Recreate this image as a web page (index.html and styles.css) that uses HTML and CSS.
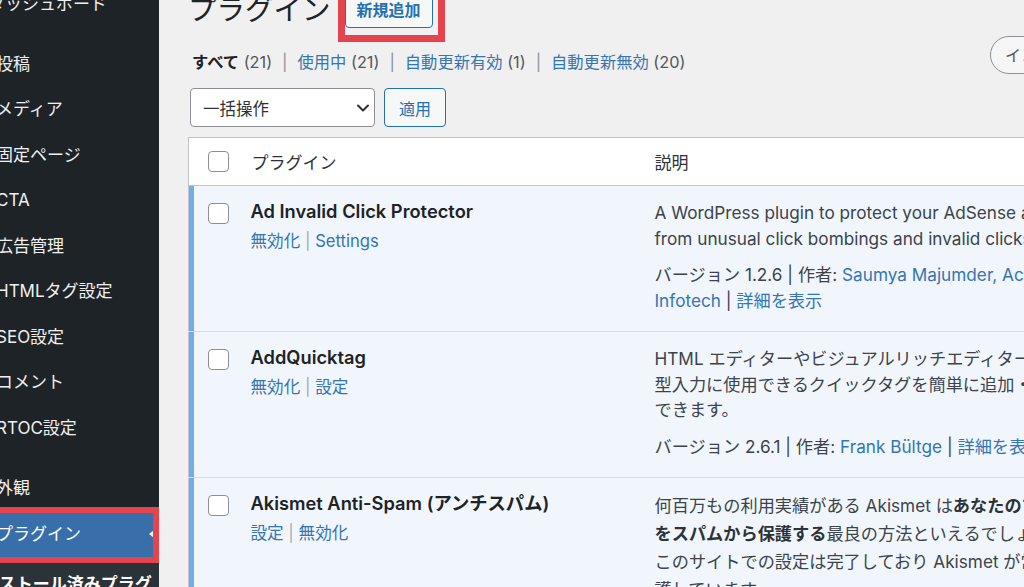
FILE: index.html
```html
<!DOCTYPE html>
<html lang="ja">
<head>
    <meta charset="UTF-8">
    <meta name="viewport" content="width=device-width, initial-scale=1.0">
    <title>プラグイン</title>
    <link rel="stylesheet" href="styles.css">
</head>
<body>
<div class="admin">

    <nav class="sidebar">
        <ul class="menu">
            <li class="menu-item menu-item--dash">ダッシュボード</li>
            <li class="menu-sep"></li>
            <li class="menu-item">投稿</li>
            <li class="menu-item">メディア</li>
            <li class="menu-item">固定ページ</li>
            <li class="menu-item">CTA</li>
            <li class="menu-item">広告管理</li>
            <li class="menu-item">HTMLタグ設定</li>
            <li class="menu-item">SEO設定</li>
            <li class="menu-item">コメント</li>
            <li class="menu-item">RTOC設定</li>
            <li class="menu-sep menu-sep--wide"></li>
            <li class="menu-item">外観</li>
            <li class="menu-item is-current">プラグイン</li>
            <li class="submenu">インストール済みプラグイン</li>
        </ul>
    </nav>

    <main class="main">
        <div class="wrap">
            <div class="title-row">
                <h1>プラグイン</h1>
                <a class="page-action">新規追加</a>
            </div>

            <div class="filter-row">
                <ul class="subsubsub">
                    <li><b class="current">すべて</b> <span class="count">(21)</span></li>
                    <li class="sep">|</li>
                    <li><a>使用中</a> <span class="count">(21)</span></li>
                    <li class="sep">|</li>
                    <li><a>自動更新有効</a> <span class="count">(1)</span></li>
                    <li class="sep">|</li>
                    <li><a>自動更新無効</a> <span class="count">(20)</span></li>
                </ul>
                <div class="search">インストール済みプラグインを検索...</div>
            </div>

            <div class="bulk-row">
                <div class="bulk-select">
                    <span>一括操作</span>
                    <svg width="12" height="8" viewBox="0 0 12 8"><polyline points="1,1.5 6,6.5 11,1.5" fill="none" stroke="#2c3338" stroke-width="2" stroke-linecap="round" stroke-linejoin="round"/></svg>
                </div>
                <button class="apply-btn">適用</button>
            </div>

            <table class="plugins">
                <colgroup>
                    <col class="col-check">
                    <col class="col-name">
                    <col>
                </colgroup>
                <thead>
                    <tr>
                        <th class="check"><span class="cb"></span></th>
                        <th class="head-name">プラグイン</th>
                        <th class="head-desc">説明</th>
                    </tr>
                </thead>
                <tbody>
                    <tr class="active">
                        <th class="check"><span class="cb"></span></th>
                        <td class="plugin-title">
                            <strong>Ad Invalid Click Protector</strong>
                            <div class="row-actions"><a>無効化</a> | <a>Settings</a></div>
                        </td>
                        <td class="plugin-desc">
                            <p>A WordPress plugin to protect your AdSense ads<br>from unusual click bombings and invalid clicks.</p>
                            <p class="meta">バージョン 1.2.6 | 作者: <a>Saumya Majumder, Acnam<br>Infotech</a> | <a>詳細を表示</a></p>
                        </td>
                    </tr>
                    <tr class="active">
                        <th class="check"><span class="cb"></span></th>
                        <td class="plugin-title">
                            <strong>AddQuicktag</strong>
                            <div class="row-actions"><a>無効化</a> | <a>設定</a></div>
                        </td>
                        <td class="plugin-desc">
                            <p>HTML エディターやビジュアルリッチエディターで定<br>型入力に使用できるクイックタグを簡単に追加・管理することが<br>できます。</p>
                            <p class="meta">バージョン 2.6.1 | 作者: <a>Frank Bültge</a> | <a>詳細を表示</a></p>
                        </td>
                    </tr>
                    <tr class="active">
                        <th class="check"><span class="cb"></span></th>
                        <td class="plugin-title">
                            <strong>Akismet Anti-Spam (アンチスパム)</strong>
                            <div class="row-actions"><a>設定</a> | <a>無効化</a></div>
                        </td>
                        <td class="plugin-desc">
                            <p class="is-loose">何百万もの利用実績がある Akismet は<b>あなたのブログ</b><br><b>をスパムから保護する</b>最良の方法といえるでしょう。<br>このサイトでの設定は完了しており Akismet が常にあなたのサイトを保<br>護しています。</p>
                        </td>
                    </tr>
                </tbody>
            </table>
        </div>
    </main>

</div>
</body>
</html>
```

FILE: styles.css
```css
html, body {
    margin: 0;
    height: 100%;
    overflow: hidden;
}
body {
    font-family: Inter, "Noto Sans CJK JP", sans-serif;
    background: #f0f0f1;
    color: #3c434a;
}
a {
    color: #3575b2;
    text-decoration: none;
}
.admin {
    display: flex;
    height: 100%;
}

/* sidebar */
.sidebar {
    width: 159px;
    flex-shrink: 0;
    background: #1d2327;
    color: #f0f0f1;
    font-size: 17px;
}
.menu {
    list-style: none;
    margin: -18px 0 0;
    padding: 0;
}
.menu-item {
    height: 45.5px;
    line-height: 45.5px;
    text-indent: -4px;
    white-space: nowrap;
}
.menu-item--dash {
    text-indent: -12px;
}
.menu-sep {
    height: 14px;
}
.menu-sep--wide {
    height: 15px;
}
.menu-item.is-current {
    position: relative;
    background: #386fab;
    color: #fff;
}
.menu-item.is-current::before {
    content: "";
    position: absolute;
    right: 5px;
    top: 50%;
    margin-top: -4px;
    border-top: 4px solid transparent;
    border-bottom: 4px solid transparent;
    border-right: 5.5px solid #f0f0f1;
}
.menu-item.is-current::after {
    content: "";
    position: absolute;
    top: -5px;
    bottom: -6px;
    left: -10px;
    right: 0;
    border: 6px solid #e5434d;
}
.submenu {
    background: #2c3338;
    color: #fff;
    font-weight: 700;
    padding-top: 12px;
    height: 60px;
    line-height: 30px;
    text-indent: -35px;
    overflow: hidden;
}

/* main */
.main {
    flex: 1;
    overflow: hidden;
}
.wrap {
    width: 1082px;
    margin-left: 29px;
}
.title-row {
    display: flex;
    align-items: center;
    height: 40px;
    margin-top: -10px;
}
.title-row h1 {
    margin: 0;
    font-size: 28.5px;
    font-weight: 400;
    line-height: 40px;
    color: #1d2327;
}
.page-action {
    position: relative;
    margin-left: 14px;
    height: 36px;
    box-sizing: border-box;
    padding: 0 11px;
    border: 1px solid #2271b1;
    border-radius: 4px;
    background: #f6f7f7;
    color: #2271b1;
    font-size: 16px;
    font-weight: 600;
    line-height: 34px;
}
.page-action::after {
    content: "";
    position: absolute;
    top: -15px;
    left: -8px;
    right: -13px;
    bottom: -15px;
    border: 7px solid #e5434d;
}
.filter-row {
    display: flex;
    align-items: flex-end;
    margin-top: 6px;
}
.subsubsub {
    flex: 1;
    display: flex;
    list-style: none;
    margin: 0;
    padding: 0 0 0 4px;
    font-size: 16.3px;
    line-height: 24px;
    color: #50575e;
    white-space: nowrap;
}
.subsubsub .current {
    color: #1d2327;
}
.subsubsub .sep {
    margin: 0 10px;
    color: #8c8f94;
}
.search {
    width: 280px;
    height: 38px;
    box-sizing: border-box;
    border: 1px solid #8c8f94;
    border-radius: 19px;
    background: #f6f6f7;
    padding-left: 14px;
    line-height: 36px;
    font-size: 16px;
    color: #50575e;
    white-space: nowrap;
    overflow: hidden;
}
.bulk-row {
    display: flex;
    gap: 9px;
    margin-top: 14px;
    padding-left: 2px;
}
.bulk-select {
    width: 185px;
    height: 39px;
    box-sizing: border-box;
    display: flex;
    align-items: center;
    justify-content: space-between;
    padding: 0 5px 0 12px;
    border: 1px solid #8c8f94;
    border-radius: 4px;
    background: #fff;
    font-size: 16.5px;
    color: #2c3338;
}
.apply-btn {
    width: 62px;
    height: 39px;
    border: 1px solid #2271b1;
    border-radius: 4px;
    background: #f6f7f7;
    color: #2271b1;
    font-family: inherit;
    font-size: 16px;
    padding: 0;
}

/* plugins table */
.plugins {
    width: 100%;
    margin-top: 10px;
    border-collapse: collapse;
    table-layout: fixed;
    border: 1px solid #c3c4c7;
    background: #fff;
}
.col-check {
    width: 62px;
}
.col-name {
    width: 404px;
}
.plugins thead th {
    height: 47px;
    padding: 0;
    border-bottom: 1px solid #c3c4c7;
    text-align: left;
    vertical-align: middle;
    font-size: 17px;
    font-weight: 400;
    color: #2c3338;
}
.plugins .head-name {
    padding-left: 1px;
}
.plugins .check {
    padding-left: 19px;
}
.cb {
    display: block;
    width: 21px;
    height: 21px;
    box-sizing: border-box;
    border: 1px solid #8c8f94;
    border-radius: 4px;
    background: #fff;
}
.plugins tbody th,
.plugins tbody td {
    vertical-align: top;
    text-align: left;
    background: #f0f6fc;
}
.plugins tbody tr + tr > * {
    border-top: 1px solid #dcdcde;
}
.plugins tbody .check {
    padding-top: 17px;
    box-shadow: inset 5px 0 0 #72aee6;
}
.plugin-title {
    padding: 13px 0 19px;
}
.plugin-title strong {
    display: block;
    font-size: 18.3px;
    font-weight: 600;
    line-height: 25px;
    color: #1d2327;
    white-space: nowrap;
}
.row-actions {
    margin-top: 5px;
    font-size: 16.6px;
    line-height: 25px;
    color: #a7aaad;
}
.plugin-desc {
    padding: 14px 13px 18px 0;
    font-size: 17.2px;
    line-height: 25.5px;
    color: #3c434a;
    white-space: nowrap;
}
.plugin-desc p {
    margin: 0;
}
.plugin-desc .meta {
    margin-top: 11px;
}
.plugin-desc .is-loose {
    line-height: 28px;
}
.plugin-desc b {
    color: #2c3338;
}
```
